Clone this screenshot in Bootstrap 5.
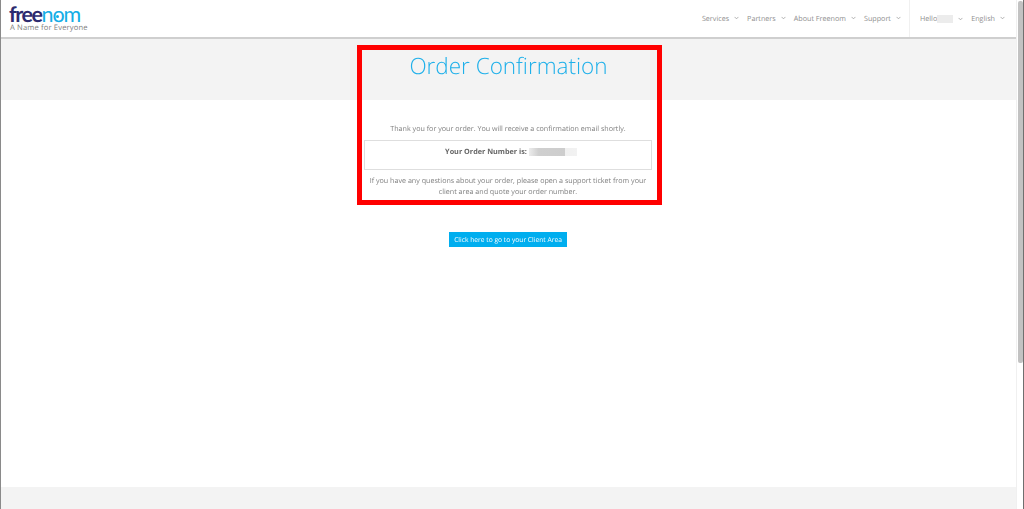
<!doctype html>
<html lang="en">
<head>
<meta charset="utf-8">
<title>Order Confirmation</title>
<link href="https://cdn.jsdelivr.net/npm/bootstrap@5.3.0/dist/css/bootstrap.min.css" rel="stylesheet">
<style>
html,body{height:509px;overflow:hidden}
body{font-family:"Open Sans",sans-serif;color:#777;background:#fff;font-size:8px;text-rendering:geometricPrecision}
.frame{height:509px;border-left:1px solid #8a8a8a;border-right:1px solid #6f6f6f;display:flex;flex-direction:column;position:relative}
.page-col{flex:1;display:flex;flex-direction:column;margin-right:6px;min-height:0;border-right:1px solid #f0f0f0;filter:blur(.3px)}
.thumb-bar{position:absolute;right:0;top:1px;width:5px;height:362px;background:#c2c2c2;border-radius:2px}
.topbar{height:39px;flex:none;border-bottom:2px solid #cfcfcf;padding-left:8px;padding-right:11px;background:#fff}
.logo-box{line-height:1;padding-top:5px}
.logo-word{font-family:Lato,sans-serif;font-size:21.5px;font-weight:700;letter-spacing:-1.5px;line-height:18px;height:18px;color:#2d2b6f}
.logo-word .nom-part{color:#14ade6;font-weight:400;letter-spacing:-1px}
.logo-o{position:relative;display:inline-block}
.logo-o::after{content:"";position:absolute;left:48%;top:58%;width:3px;height:3px;margin-left:-1.5px;border-radius:50%;background:#14ade6}
.logo-tag{font-size:7.6px;color:#808080;line-height:9px;letter-spacing:.15px;padding-left:1px;padding-top:1px}
.top-link{font-size:7.2px;color:#8f8f8f;white-space:nowrap;text-decoration:none;padding-top:2px}
.top-link svg{margin-left:5px;vertical-align:1px}
.top-nav{height:37px;gap:8px}
.top-sep{border-left:1px solid #f0f0f0;height:37px;margin-right:2px}
.veil{display:inline-block;background:#e6e6e6;filter:blur(.6px)}
.veil-name{width:16px;height:8px;background:#ececec}
.head-band{height:61px;flex:none;background:#f3f3f3;text-align:center}
.head-title{font-size:22.5px;font-weight:300;color:#1fb0ea;line-height:32px;margin:11px 0 0}
.body-zone{flex:1;min-height:0}
.order-col{width:288px;margin-left:363px;text-align:center}
.thanks{font-size:7.15px;color:#808080;line-height:12px;margin:23px 0 0}
.num-box{height:30px;border:1px solid #dedede;margin-top:5px;font-size:7.25px;padding:5px 0 0 6px;line-height:12px;color:#666;font-weight:700;display:flex;justify-content:center;align-items:flex-start}
.veil-num{width:48px;height:8px;margin:2px 0 0 2px;background:linear-gradient(90deg,#ececec 0,#cfcfcf 20%,#cdcdcd 75%,#f0f0f0 76%,#f2f2f2 100%)}
.note{font-size:7.15px;color:#808080;line-height:11px;margin:6px 0 0}
.go-btn{display:block;width:118px;height:15px;margin:34px auto 0;padding:0;border:0;border-radius:0;background:#00aeef;color:#fff;font-size:6.7px;line-height:15px;white-space:nowrap}
.foot-band{height:22px;flex:none;background:#f3f3f3}
.red-mark{position:absolute;left:356px;top:45px;width:305px;height:160px;border:5px solid #f00;pointer-events:none}
</style>
</head>
<body>
<div class="frame">
  <div class="page-col">
    <nav class="topbar d-flex justify-content-between">
      <div class="logo-box">
        <div class="logo-word">free<span class="nom-part">n<span class="logo-o">o</span>m</span></div>
        <div class="logo-tag">A Name for Everyone</div>
      </div>
      <div class="top-nav d-flex align-items-center">
        <a class="top-link" href="#">Services<svg width="5" height="4" viewBox="0 0 6 4"><path d="M.7.7 3 3 5.3.7" fill="none" stroke="#999" stroke-width=".9"/></svg></a>
        <a class="top-link" href="#">Partners<svg width="5" height="4" viewBox="0 0 6 4"><path d="M.7.7 3 3 5.3.7" fill="none" stroke="#999" stroke-width=".9"/></svg></a>
        <a class="top-link" href="#">About Freenom<svg width="5" height="4" viewBox="0 0 6 4"><path d="M.7.7 3 3 5.3.7" fill="none" stroke="#999" stroke-width=".9"/></svg></a>
        <a class="top-link" href="#">Support<svg width="5" height="4" viewBox="0 0 6 4"><path d="M.7.7 3 3 5.3.7" fill="none" stroke="#999" stroke-width=".9"/></svg></a>
        <span class="top-sep"></span>
        <a class="top-link d-flex align-items-center" href="#">Hello<span class="veil veil-name"></span><svg width="5" height="4" viewBox="0 0 6 4"><path d="M.7.7 3 3 5.3.7" fill="none" stroke="#999" stroke-width=".9"/></svg></a>
        <a class="top-link" href="#">English<svg width="5" height="4" viewBox="0 0 6 4"><path d="M.7.7 3 3 5.3.7" fill="none" stroke="#999" stroke-width=".9"/></svg></a>
      </div>
    </nav>
    <header class="head-band"><h1 class="head-title">Order Confirmation</h1></header>
    <main class="body-zone">
      <div class="order-col">
        <p class="thanks">Thank you for your order. You will receive a confirmation email shortly.</p>
        <div class="num-box">Your Order Number is:<span class="veil veil-num"></span></div>
        <p class="note">If you have any questions about your order, please open a support ticket from your client area and quote your order number.</p>
        <a class="btn go-btn" href="#">Click here to go to your Client Area</a>
      </div>
    </main>
    <footer class="foot-band"></footer>
  </div>
  <div class="thumb-bar"></div>
  <div class="red-mark"></div>
</div>
<script src="https://cdn.jsdelivr.net/npm/bootstrap@5.3.0/dist/js/bootstrap.bundle.min.js"></script>
</body>
</html>
